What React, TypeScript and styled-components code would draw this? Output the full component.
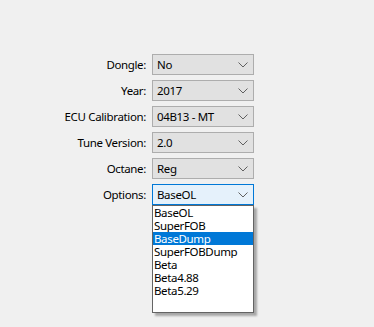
import React from "react";
import styled, { createGlobalStyle } from "styled-components";

const Global = createGlobalStyle`
  html, body { margin: 0; padding: 0; background: #f0f0f0; }
  body { font-family: "Noto Sans", "Open Sans", sans-serif; font-size: 12px; color: #000; }
`;

const Page = styled.div`
  width: 374px;
  height: 327px;
  background: #f0f0f0;
  padding-top: 54px;
  box-sizing: border-box;
`;

const Form = styled.div`
  display: grid;
  grid-template-columns: 146px 102px;
  grid-auto-rows: 21px;
  column-gap: 6px;
  row-gap: 5px;
`;

const Label = styled.div`
  display: flex;
  align-items: center;
  justify-content: flex-end;
  font-size: 11.5px;
  line-height: 1;
  letter-spacing: -0.35px;
`;

const ComboWrap = styled.div`
  position: relative;
`;

const Combo = styled.div<{ $focused?: boolean }>`
  box-sizing: border-box;
  height: 21px;
  display: flex;
  align-items: center;
  justify-content: space-between;
  padding: 0 4px 0 4px;
  border: 1px solid ${(p) => (p.$focused ? "#0078d7" : "#adadad")};
  background: ${(p) => (p.$focused ? "#e5f1fb" : "#e1e1e1")};
  font-size: 11.5px;
  letter-spacing: -0.35px;
`;

const Chevron = styled.svg`
  width: 10px;
  height: 6px;
  margin-right: 1px;
`;

const List = styled.div`
  position: absolute;
  top: 21px;
  left: 0;
  width: 102px;
  height: 108px;
  box-sizing: border-box;
  background: #fff;
  border: 1px solid #646464;
  box-shadow: 3px 3px 2px rgba(0, 0, 0, 0.3);
  z-index: 2;
`;

const Item = styled.div<{ $selected?: boolean }>`
  height: 13px;
  line-height: 13px;
  padding-left: 1px;
  font-size: 11.5px;
  letter-spacing: -0.35px;
  overflow: hidden;
  background: ${(p) => (p.$selected ? "#0078d7" : "transparent")};
  color: ${(p) => (p.$selected ? "#fff" : "#000")};
`;

const Arrow = () => (
  <Chevron viewBox="0 0 10 6">
    <path d="M0.5 0.5 L5 5 L9.5 0.5" fill="none" stroke="#606060" strokeWidth="1" />
  </Chevron>
);

const rows = [
  { label: "Dongle:", value: "No" },
  { label: "Year:", value: "2017" },
  { label: "ECU Calibration:", value: "04B13 - MT" },
  { label: "Tune Version:", value: "2.0" },
  { label: "Octane:", value: "Reg" },
];

const options = ["BaseOL", "SuperFOB", "BaseDump", "SuperFOBDump", "Beta", "Beta4.88", "Beta5.29"];

export default function App() {
  return (
    <Page>
      <Global />
      <Form>
        {rows.map((r) => (
          <React.Fragment key={r.label}>
            <Label>{r.label}</Label>
            <ComboWrap>
              <Combo>
                <span>{r.value}</span>
                <Arrow />
              </Combo>
            </ComboWrap>
          </React.Fragment>
        ))}
        <Label>Options:</Label>
        <ComboWrap>
          <Combo $focused>
            <span>BaseOL</span>
            <Arrow />
          </Combo>
          <List>
            {options.map((o) => (
              <Item key={o} $selected={o === "BaseDump"}>
                {o}
              </Item>
            ))}
          </List>
        </ComboWrap>
      </Form>
    </Page>
  );
}
